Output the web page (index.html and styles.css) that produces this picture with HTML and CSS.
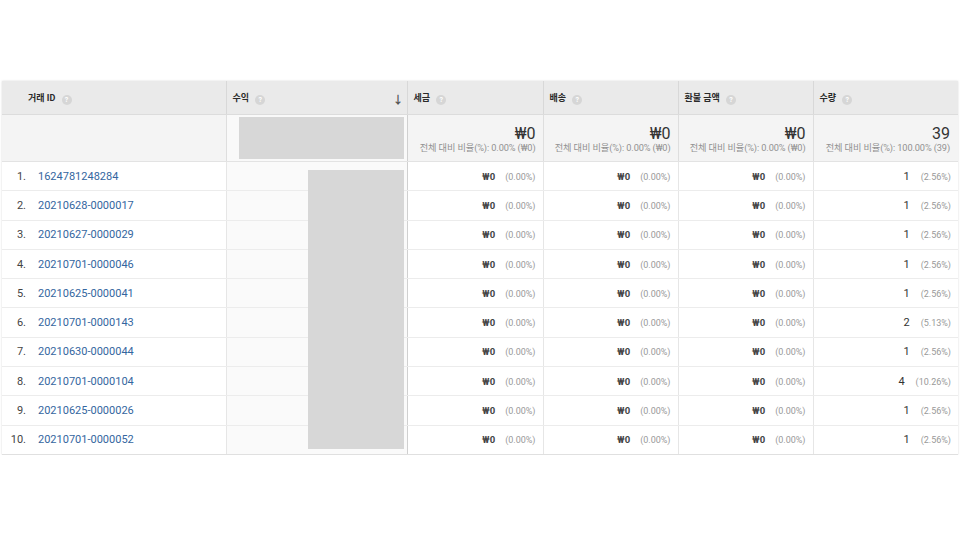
FILE: index.html
```html
<!DOCTYPE html>
<html lang="ko">
<head>
<meta charset="utf-8">
<link rel="stylesheet" href="styles.css">
</head>
<body>
<div class="page">
  <table class="report">
    <colgroup>
      <col class="c1"><col class="c2"><col class="c3"><col class="c4"><col class="c5"><col class="c6">
    </colgroup>
    <thead>
      <tr class="head">
        <th class="h-id">거래 ID <span class="help">?</span></th>
        <th class="h-rev"><span>수익 <span class="help">?</span></span><span class="sort">↓</span></th>
        <th>세금 <span class="help">?</span></th>
        <th>배송 <span class="help">?</span></th>
        <th>환불 금액 <span class="help">?</span></th>
        <th>수량 <span class="help">?</span></th>
      </tr>
      <tr class="sum">
        <td></td>
        <td class="sum-rev"><div class="redact-sum"></div></td>
        <td><div class="big">₩0</div><div class="sub">전체 대비 비율(%): 0.00% (₩0)</div></td>
        <td><div class="big">₩0</div><div class="sub">전체 대비 비율(%): 0.00% (₩0)</div></td>
        <td><div class="big">₩0</div><div class="sub">전체 대비 비율(%): 0.00% (₩0)</div></td>
        <td><div class="big">39</div><div class="sub">전체 대비 비율(%): 100.00% (39)</div></td>
      </tr>
    </thead>
    <tbody>
      <tr><td class="id"><span class="n">1.</span><a>1624781248284</a></td><td class="rev first"><div class="redact"></div></td><td><b>₩0</b><i>(0.00%)</i></td><td><b>₩0</b><i>(0.00%)</i></td><td><b>₩0</b><i>(0.00%)</i></td><td><b>1</b><i>(2.56%)</i></td></tr>
      <tr><td class="id"><span class="n">2.</span><a>20210628-0000017</a></td><td class="rev"></td><td><b>₩0</b><i>(0.00%)</i></td><td><b>₩0</b><i>(0.00%)</i></td><td><b>₩0</b><i>(0.00%)</i></td><td><b>1</b><i>(2.56%)</i></td></tr>
      <tr><td class="id"><span class="n">3.</span><a>20210627-0000029</a></td><td class="rev"></td><td><b>₩0</b><i>(0.00%)</i></td><td><b>₩0</b><i>(0.00%)</i></td><td><b>₩0</b><i>(0.00%)</i></td><td><b>1</b><i>(2.56%)</i></td></tr>
      <tr><td class="id"><span class="n">4.</span><a>20210701-0000046</a></td><td class="rev"></td><td><b>₩0</b><i>(0.00%)</i></td><td><b>₩0</b><i>(0.00%)</i></td><td><b>₩0</b><i>(0.00%)</i></td><td><b>1</b><i>(2.56%)</i></td></tr>
      <tr><td class="id"><span class="n">5.</span><a>20210625-0000041</a></td><td class="rev"></td><td><b>₩0</b><i>(0.00%)</i></td><td><b>₩0</b><i>(0.00%)</i></td><td><b>₩0</b><i>(0.00%)</i></td><td><b>1</b><i>(2.56%)</i></td></tr>
      <tr><td class="id"><span class="n">6.</span><a>20210701-0000143</a></td><td class="rev"></td><td><b>₩0</b><i>(0.00%)</i></td><td><b>₩0</b><i>(0.00%)</i></td><td><b>₩0</b><i>(0.00%)</i></td><td><b>2</b><i>(5.13%)</i></td></tr>
      <tr><td class="id"><span class="n">7.</span><a>20210630-0000044</a></td><td class="rev"></td><td><b>₩0</b><i>(0.00%)</i></td><td><b>₩0</b><i>(0.00%)</i></td><td><b>₩0</b><i>(0.00%)</i></td><td><b>1</b><i>(2.56%)</i></td></tr>
      <tr><td class="id"><span class="n">8.</span><a>20210701-0000104</a></td><td class="rev"></td><td><b>₩0</b><i>(0.00%)</i></td><td><b>₩0</b><i>(0.00%)</i></td><td><b>₩0</b><i>(0.00%)</i></td><td><b>4</b><i>(10.26%)</i></td></tr>
      <tr><td class="id"><span class="n">9.</span><a>20210625-0000026</a></td><td class="rev"></td><td><b>₩0</b><i>(0.00%)</i></td><td><b>₩0</b><i>(0.00%)</i></td><td><b>₩0</b><i>(0.00%)</i></td><td><b>1</b><i>(2.56%)</i></td></tr>
      <tr><td class="id"><span class="n">10.</span><a>20210701-0000052</a></td><td class="rev"></td><td><b>₩0</b><i>(0.00%)</i></td><td><b>₩0</b><i>(0.00%)</i></td><td><b>₩0</b><i>(0.00%)</i></td><td><b>1</b><i>(2.56%)</i></td></tr>
    </tbody>
  </table>
</div>
</body>
</html>
```
FILE: styles.css
```css
html, body {
  margin: 0;
  padding: 0;
  background: #fff;
}
body {
  font-family: Roboto, "Noto Sans CJK KR", sans-serif;
  color: #333;
}
.page {
  padding: 81px 2px 0 2px;
}
.report {
  width: 956px;
  border-collapse: collapse;
  table-layout: fixed;
  box-shadow: 0 0 2px rgba(0,0,0,0.15);
}
.c1 { width: 224px; }
.c2 { width: 181px; }
.c3 { width: 136px; }
.c4 { width: 135px; }
.c5 { width: 135px; }
.c6 { width: 145px; }

.head th {
  height: 33px;
  background: #eaeaea;
  border-right: 1px solid #d8d8d8;
  border-bottom: 1px solid #dcdcdc;
  text-align: left;
  font-size: 9px;
  font-weight: 700;
  color: #2a2a2a;
  padding: 0 6px;
  vertical-align: middle;
}
.head th:last-child { border-right: none; }
.head th.h-id { padding-left: 26px; }
.h-rev { position: relative; }
.sort {
  position: absolute;
  right: 3px;
  top: 10px;
  font-size: 11px;
  font-weight: 700;
  color: #555;
}
.help {
  display: inline-block;
  width: 10px;
  height: 10px;
  border-radius: 50%;
  background: #d6d6d6;
  color: #fff;
  font-size: 7px;
  font-weight: 700;
  line-height: 10px;
  text-align: center;
  margin-left: 4px;
  vertical-align: -1px;
}

.sum td {
  height: 46px;
  background: #f4f4f4;
  border-right: 1px solid #dedede;
  border-bottom: 1px solid #e3e3e3;
  text-align: right;
  padding: 0 7px 0 4px;
  vertical-align: middle;
}
.sum td:last-child { border-right: none; padding-right: 8px; }
.sum td.sum-rev {
  background: #f9f9f9;
  padding: 0 3px 0 12px;
  border-right: 1px solid #d0d0d0;
}
.redact-sum {
  height: 42px;
  background: #d7d7d7;
}
.big {
  font-size: 16px;
  line-height: 17px;
  color: #333;
  padding-top: 2px;
}
.sub {
  font-size: 9.2px;
  line-height: 12px;
  color: #919191;
  white-space: nowrap;
  letter-spacing: -0.1px;
}

tbody td {
  height: 28.3px;
  border-right: 1px solid #e6e6e6;
  border-bottom: 1px solid #ececec;
  text-align: right;
  padding: 0 7px 0 6px;
  font-size: 9px;
  vertical-align: middle;
  white-space: nowrap;
}
tbody td:last-child { border-right: none; }
tbody tr:last-child td { border-bottom: 1px solid #e0e0e0; }
tbody td.id {
  text-align: left;
  padding-left: 4px;
  font-size: 11px;
}
tbody td.id .n {
  display: inline-block;
  width: 20px;
  text-align: right;
  margin-right: 12px;
  color: #444;
}
tbody td.id a {
  color: #3466a0;
  text-decoration: none;
}
tbody td.rev {
  background: #fafafa;
  border-right: 1px solid #d0d0d0;
  padding: 0;
}
tbody td.rev.first { position: relative; }
.redact {
  position: absolute;
  z-index: 2;
  top: 8px;
  right: 3px;
  width: 96px;
  height: 279px;
  background: #d7d7d7;
}
tbody b {
  font-weight: 700;
  font-size: 9.5px;
  color: #444;
}
tbody i {
  font-style: normal;
  color: #999;
  display: inline-block;
  margin-left: 10px;
  min-width: 30px;
  text-align: left;
}
tbody td:last-child b {
  font-weight: 400;
  font-size: 11px;
  color: #333;
}
tbody td:last-child i { margin-left: 11px; }
```
